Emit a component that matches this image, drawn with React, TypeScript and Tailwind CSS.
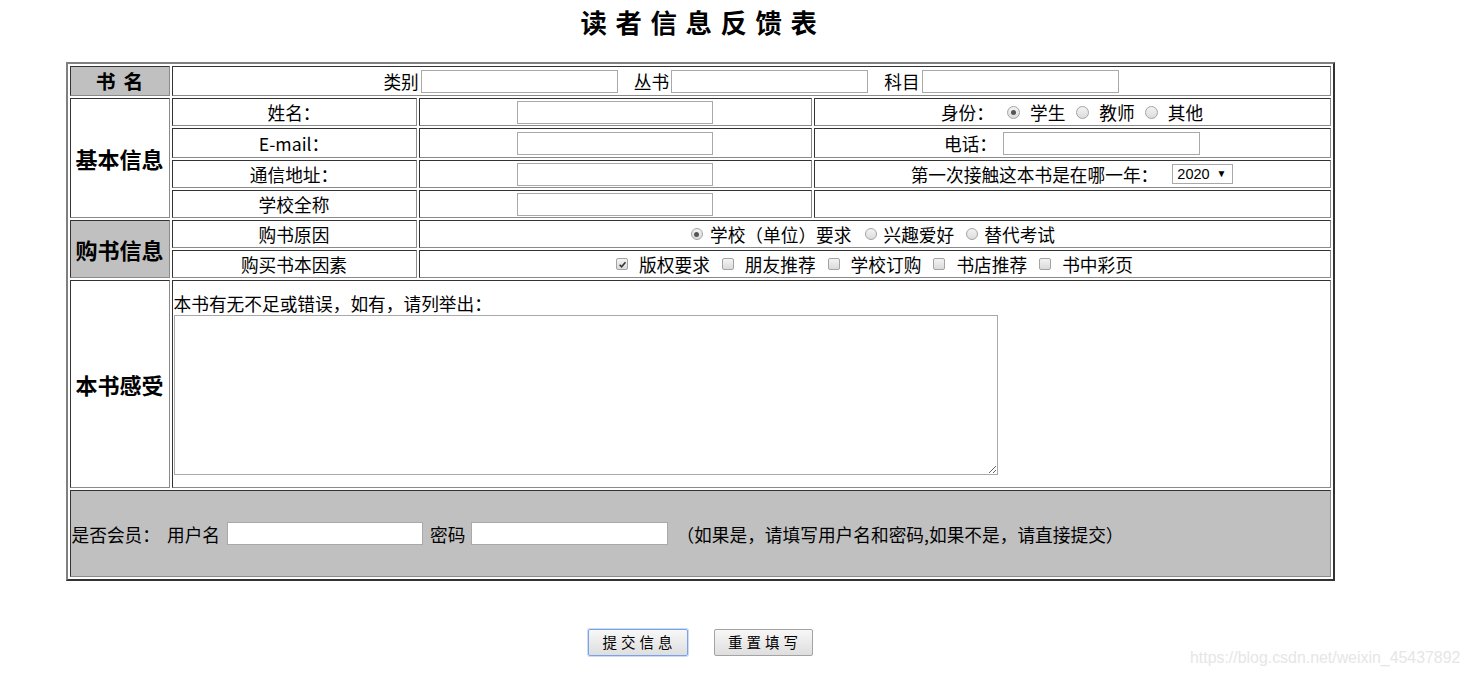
const font = { fontFamily: '"Noto Sans CJK SC", "Microsoft YaHei", sans-serif' }

const cell =
  'border border-t-[#333] border-l-[#333] border-r-[#8a8a8a] border-b-[#8a8a8a] p-px bg-white flex items-center justify-center leading-[24px]'

function Radio({ checked, size = 13 }: { checked?: boolean; size?: number }) {
  return (
    <span
      className={
        'inline-flex shrink-0 items-center justify-center rounded-full border border-[#a3a3a3] bg-linear-to-b from-[#f3f3f3] to-[#dcdcdc] ' +
        (size === 12 ? 'w-[12px] h-[12px]' : 'w-[13px] h-[13px]')
      }
    >
      {checked && <span className="w-[5px] h-[5px] rounded-full bg-[#555]" />}
    </span>
  )
}

function Check({ checked }: { checked?: boolean }) {
  return (
    <span className="inline-flex shrink-0 items-center justify-center w-[12px] h-[12px] rounded-[2px] border border-[#a3a3a3] bg-linear-to-b from-[#f3f3f3] to-[#dadada]">
      {checked && (
        <svg viewBox="0 0 10 10" className="w-[9px] h-[9px]">
          <path d="M1.8 5.2 L4 7.5 L8.3 2.4" stroke="#333" strokeWidth="1.7" fill="none" />
        </svg>
      )}
    </span>
  )
}

function TextBox({ w = 'w-[197px]', className = '' }: { w?: string; className?: string }) {
  return <input type="text" className={`${w} h-[23px] border border-[#a9a9a9] bg-white outline-none ${className}`} />
}

export default function App() {
  return (
    <div className="relative w-[1471px] h-[678px] bg-white overflow-hidden text-black" style={font}>
      <div className="w-[1400px]">
        <h1 className="h-[45px] flex items-center justify-center pl-[6px] text-[26.4px] font-bold tracking-[8.6px] leading-none">
          读者信息反馈表
        </h1>

        <div className="mt-[17px] mx-auto w-[1269px] grid grid-cols-[100px_245px_393px_517px] grid-rows-[30px_28px_30px_28px_28px_28px_28px_208px_87px] gap-[2px] p-[2px] border-2 border-t-[#808080] border-l-[#808080] border-r-[#333] border-b-[#333] text-[17.7px]">
          {/* 书名 */}
          <div className={`${cell} !bg-[#c0c0c0] gap-[8px] text-[19.8px] font-bold`}>
            <span>书</span>
            <span>名</span>
          </div>
          <div className={`${cell} col-span-3`}>
            <span>类别</span>
            <TextBox className="ml-[2px]" />
            <span className="ml-[16px]">丛书</span>
            <TextBox className="ml-[2px]" />
            <span className="ml-[16px]">科目</span>
            <TextBox className="ml-[2px]" />
          </div>

          {/* 基本信息 */}
          <div className={`${cell} row-span-4 text-[22px] font-bold`}>基本信息</div>
          <div className={cell}>姓名：</div>
          <div className={cell}>
            <TextBox w="w-[196px]" />
          </div>
          <div className={cell}>
            <span>身份：</span>
            <span className="ml-[13px] flex"><Radio checked /></span>
            <span className="ml-[10px]">学生</span>
            <span className="ml-[11px] flex"><Radio /></span>
            <span className="ml-[10px]">教师</span>
            <span className="ml-[10px] flex"><Radio /></span>
            <span className="ml-[10px]">其他</span>
          </div>

          <div className={cell}>E-mail：</div>
          <div className={cell}>
            <TextBox w="w-[196px]" />
          </div>
          <div className={cell}>
            <span>电话：</span>
            <TextBox className="ml-[6px]" />
          </div>

          <div className={cell}>通信地址：</div>
          <div className={cell}>
            <TextBox w="w-[196px]" />
          </div>
          <div className={cell}>
            <span>第一次接触这本书是在哪一年：</span>
            <span
              className="ml-[14px] w-[61px] h-[20px] border border-[#a9a9a9] flex items-center pl-[4px] gap-[7px] text-[14.5px] leading-none"
              style={{ fontFamily: '"Liberation Sans", Arial, sans-serif' }}
            >
              2020
              <span className="text-[10px]">▼</span>
            </span>
          </div>

          <div className={cell}>学校全称</div>
          <div className={cell}>
            <TextBox w="w-[196px]" />
          </div>
          <div className={cell} />

          {/* 购书信息 */}
          <div className={`${cell} row-span-2 !bg-[#c0c0c0] text-[22px] font-bold`}>购书信息</div>
          <div className={cell}>购书原因</div>
          <div className={`${cell} col-span-2 pr-[4px]`}>
            <Radio checked size={12} />
            <span className="ml-[7px]">学校（单位）要求</span>
            <span className="ml-[14px] flex"><Radio size={12} /></span>
            <span className="ml-[6px]">兴趣爱好</span>
            <span className="ml-[12px] flex"><Radio size={12} /></span>
            <span className="ml-[6px]">替代考试</span>
          </div>

          <div className={cell}>购买书本因素</div>
          <div className={`${cell} col-span-2`}>
            <Check checked />
            <span className="ml-[11px]">版权要求</span>
            <span className="ml-[12px] flex"><Check /></span>
            <span className="ml-[11px]">朋友推荐</span>
            <span className="ml-[12px] flex"><Check /></span>
            <span className="ml-[11px]">学校订购</span>
            <span className="ml-[12px] flex"><Check /></span>
            <span className="ml-[11px]">书店推荐</span>
            <span className="ml-[12px] flex"><Check /></span>
            <span className="ml-[11px]">书中彩页</span>
          </div>

          {/* 本书感受 */}
          <div className={`${cell} text-[22px] font-bold`}>本书感受</div>
          <div className="col-span-3 border border-t-[#333] border-l-[#333] border-r-[#8a8a8a] border-b-[#8a8a8a] p-px pt-[11px] bg-white">
            <div className="leading-[22px]">本书有无不足或错误，如有，请列举出：</div>
            <textarea className="block mt-[1px] w-[824px] h-[160px] border border-[#a9a9a9] outline-none" />
          </div>

          {/* 会员 */}
          <div className="col-span-4 border border-t-[#333] border-l-[#333] border-r-[#8a8a8a] border-b-[#8a8a8a] p-px bg-[#c0c0c0] flex items-center leading-[24px]">
            <span>是否会员：</span>
            <span className="ml-[7px]">用户名</span>
            <TextBox w="w-[196px]" className="ml-[7px]" />
            <span className="ml-[7px]">密码</span>
            <TextBox className="ml-[6px]" />
            <span className="ml-[8px]">（如果是，请填写用户名和密码,如果不是，请直接提交）</span>
          </div>
        </div>

        <div className="mt-[48px] flex justify-center gap-[26px]">
          <button className="w-[100px] h-[27px] rounded-[2px] border border-[#7aa3e6] shadow-[0_0_0_1px_#c9dbf7] bg-linear-to-b from-[#f7f7f7] to-[#dedede] text-[14.5px] tracking-[4px] pl-[4px] leading-none">
            提交信息
          </button>
          <button className="w-[99px] h-[27px] rounded-[2px] border border-[#a3a3a3] bg-linear-to-b from-[#f7f7f7] to-[#dedede] text-[14.5px] tracking-[4px] pl-[4px] leading-none">
            重置填写
          </button>
        </div>
      </div>

      <div
        className="absolute left-[1190px] top-[648px] text-[15.9px] text-[#e6e6e6] leading-[20px]"
        style={{ fontFamily: '"Liberation Sans", Arial, sans-serif' }}
      >
        https://blog.csdn.net/weixin_45437892
      </div>
    </div>
  )
}
